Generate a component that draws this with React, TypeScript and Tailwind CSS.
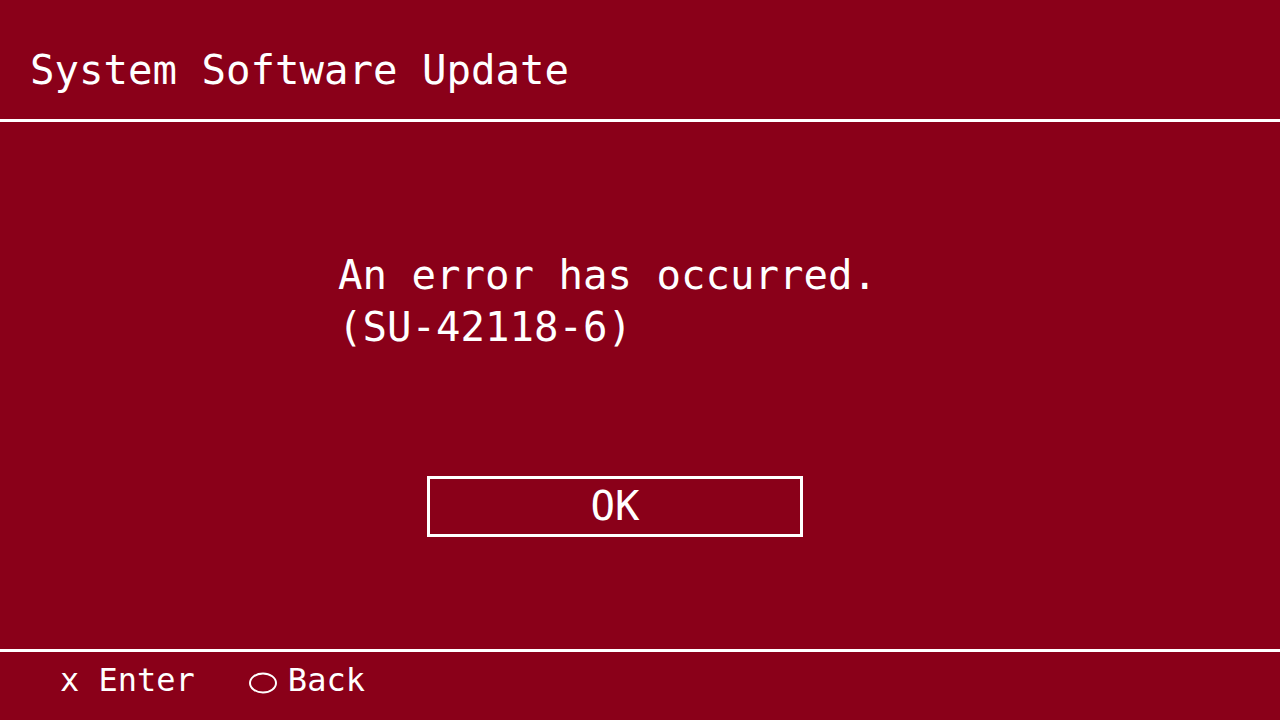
export default function App() {
  return (
    <div className="w-[1280px] h-[720px] bg-[#8a0019] text-white flex flex-col overflow-hidden font-['DejaVu_Sans_Mono','Liberation_Mono',monospace]">
      {/* title bar */}
      <header className="h-[122px] shrink-0 border-b-[3px] border-white pt-[44px] pl-[30px]">
        <h1 className="text-[40.7px] leading-[52px]">System Software Update</h1>
      </header>

      {/* message + confirm button */}
      <main className="flex-1 flex flex-col pt-[127px]">
        <div className="pl-[338px] text-[40.7px] leading-[52px]">
          <p>An error has occurred.</p>
          <p>(SU-42118-6)</p>
        </div>
        <button className="ml-[427px] mt-[123px] w-[376px] h-[61px] border-[3px] border-white flex items-center justify-center text-[40.7px] leading-none">
          OK
        </button>
      </main>

      {/* control hints */}
      <footer className="h-[71px] shrink-0 border-t-[3px] border-white pt-[12px] pl-[60px] flex items-start text-[32px] leading-[32px]">
        <span>x Enter</span>
        <span className="ml-[53px] flex items-start">
          <svg width="30" height="22" viewBox="0 0 30 22" className="mt-[8px] mr-[10px]">
            <ellipse cx="15" cy="11" rx="13" ry="9.5" fill="none" stroke="white" strokeWidth="2" />
          </svg>
          Back
        </span>
      </footer>
    </div>
  );
}
